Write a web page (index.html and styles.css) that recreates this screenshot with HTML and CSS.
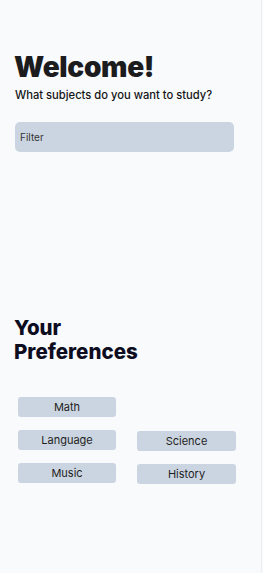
FILE: index.html
```html
<!DOCTYPE html>
<html>
<head>
<meta charset="utf-8">
<link rel="stylesheet" href="styles.css">
</head>
<body>
<div class="page">
  <h1 class="title">Welcome!</h1>
  <p class="subtitle">What subjects do you want to study?</p>
  <div class="filter">Filter</div>
  <h2 class="prefs">Your<br>Preferences</h2>
  <div class="chips">
    <div class="chip">Math</div>
    <div class="empty"></div>
    <div class="chip">Language</div>
    <div class="chip low">Science</div>
    <div class="chip">Music</div>
    <div class="chip low">History</div>
  </div>
</div>
</body>
</html>
```
FILE: styles.css
```css
html, body {
  margin: 0;
  padding: 0;
  background: #f8fafc;
}
body {
  font-family: Inter, "Liberation Sans", sans-serif;
  height: 573px;
  width: 261px;
  border-right: 1px solid #eceef1;
  overflow: hidden;
}
.page {
  padding: 49px 27px 0 14px;
}
.title {
  margin: 0;
  font-size: 28px;
  line-height: 36px;
  font-weight: 900;
  color: #1c1c1e;
  letter-spacing: -0.3px;
}
.subtitle {
  margin: 2px 0 0 1px;
  font-size: 11.2px;
  line-height: 16px;
  font-weight: 500;
  color: #141414;
}
.filter {
  margin: 19px 0 0 1px;
  height: 30px;
  background: #cbd5e1;
  border-radius: 5px;
  box-sizing: border-box;
  padding-left: 5px;
  display: flex;
  align-items: center;
  font-size: 10px;
  color: #333;
}
.prefs {
  margin: 164px 0 0 0;
  font-size: 20.5px;
  line-height: 24px;
  font-weight: 800;
  color: #0d0d1f;
}
.chips {
  margin: 33px 0 0 4px;
  display: grid;
  grid-template-columns: 98px 99px;
  column-gap: 21px;
  row-gap: 13px;
}
.chip {
  height: 20px;
  background: #cbd5e1;
  border-radius: 3px;
  display: flex;
  align-items: center;
  justify-content: center;
  font-size: 11px;
  color: #1e1e1e;
}
.chip.low {
  transform: translateY(1px);
}
```
